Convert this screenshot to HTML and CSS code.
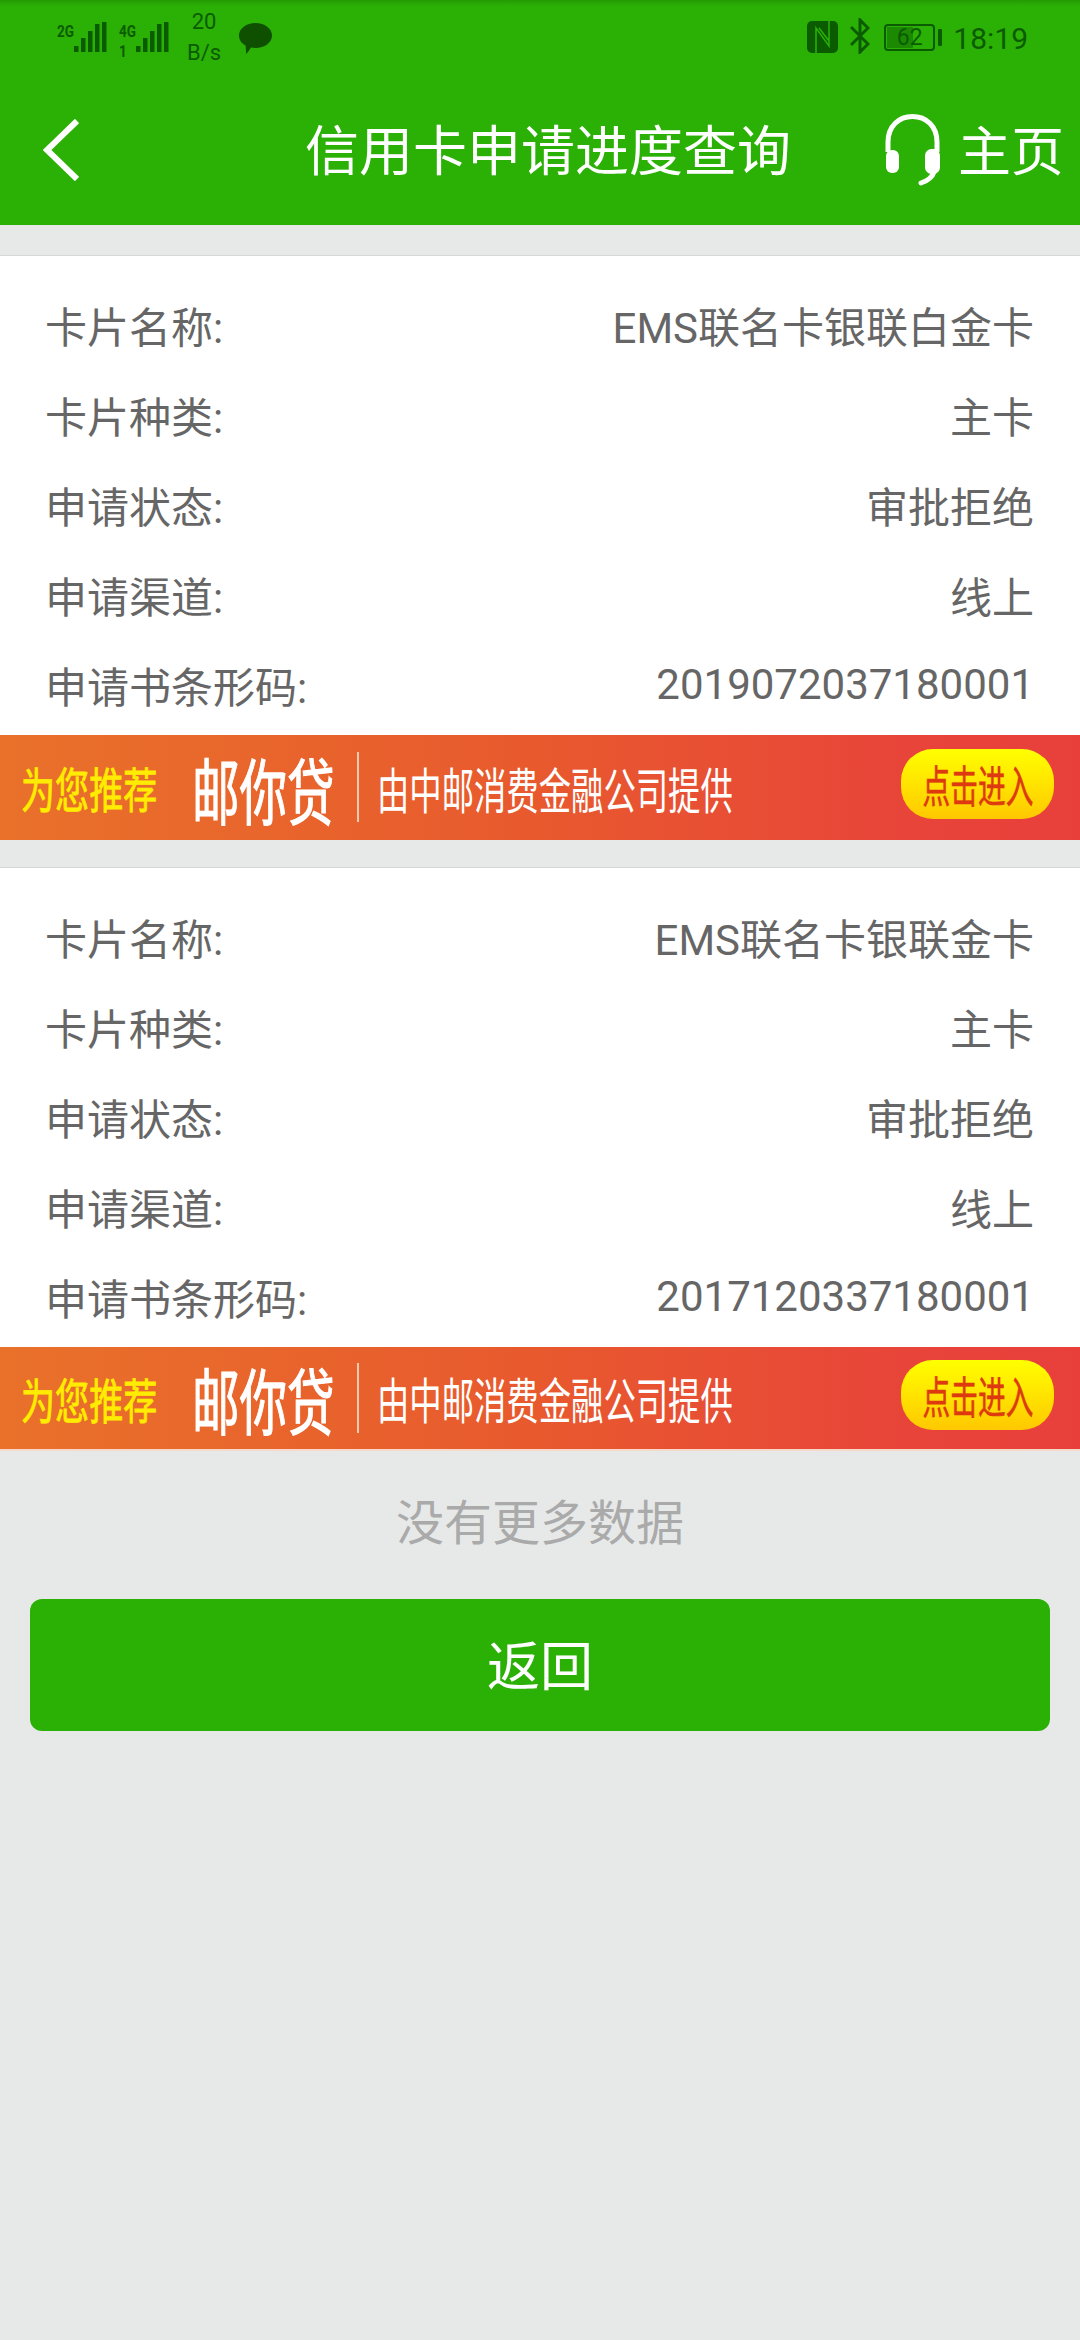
FILE: index.html
```html
<!DOCTYPE html>
<html lang="en">
<head>
    <meta charset="UTF-8">
    <meta name="viewport" content="width=device-width, initial-scale=1.0">
    <title>信用卡申请进度查询</title>
    <link rel="stylesheet" href="styles.css">
</head>
<body>
    <header class="top">
        <div class="status">
            <div class="status-left">
                <div class="sim">
                    <span class="sim-label">2G</span>
                    <svg class="bars" viewBox="0 0 33 30"><path d="M0 24h4.500v6H0zM7 16h4.500v14H7zM14 9h4.500v21H14zM21 2h4.500v28H21zM28 0h4.500v30H28z"/></svg>
                </div>
                <div class="sim sim-second">
                    <span class="sim-label">4G<br>1</span>
                    <svg class="bars" viewBox="0 0 33 30"><path d="M0 24h4.500v6H0zM7 16h4.500v14H7zM14 9h4.500v21H14zM21 2h4.500v28H21zM28 0h4.500v30H28z"/></svg>
                </div>
                <div class="speed"><span>20</span><span>B/s</span></div>
                <svg class="chat" viewBox="0 0 33 31"><path d="M16.500 0C25.600 0 33 5.500 33 12.500S25.600 25 16.500 25c-1.600 0-3-.2-4.500-.5C10.500 27 8.500 29.500 7 31c0-3 0-6-.5-8.500C2.300 20.200 0 16.600 0 12.500 0 5.500 7.400 0 16.500 0z"/></svg>
            </div>
            <div class="status-right">
                <svg class="nfc" viewBox="0 0 31 32"><rect width="31" height="32" rx="5"/><path class="nfc-cut" d="M9 32V7L22 25V0M12 7l10 13"/></svg>
                <svg class="bt" viewBox="0 0 20 36"><path d="M1 9l17 17-8 8V2l8 8L1 27" fill="none" stroke-width="3"/></svg>
                <div class="battery">
                    <div class="battery-body"><span class="battery-fill"></span><span class="battery-num">62</span></div>
                    <span class="battery-tip"></span>
                </div>
                <span class="clock">18:19</span>
            </div>
        </div>
        <nav class="nav">
            <svg class="back" viewBox="0 0 36 62"><path d="M34 2L4 31l30 29" fill="none" stroke="#fff" stroke-width="6"/></svg>
            <h1 class="title">信用卡申请进度查询</h1>
            <div class="home">
                <svg class="headset" viewBox="0 0 56 72"><path d="M3 38V28C3 12 14 2.500 27.500 2.500S52 12 52 28V38" fill="none" stroke="#fff" stroke-width="5"/><rect x="1" y="36" width="13" height="23" rx="6" fill="#fff"/><rect x="40" y="35" width="15" height="25" rx="6.500" fill="#fff"/><path d="M49 58C47 64 42 67 36 69" fill="none" stroke="#fff" stroke-width="5" stroke-linecap="round"/></svg>
                <span class="home-text">主页</span>
            </div>
        </nav>
    </header>

    <main>
        <section class="card">
            <div class="rows">
                <div class="row"><span>卡片名称:</span><span>EMS联名卡银联白金卡</span></div>
                <div class="row"><span>卡片种类:</span><span>主卡</span></div>
                <div class="row"><span>申请状态:</span><span>审批拒绝</span></div>
                <div class="row"><span>申请渠道:</span><span>线上</span></div>
                <div class="row"><span>申请书条形码:</span><span>2019072037180001</span></div>
            </div>
            <div class="banner">
                <span class="b-tag">为您推荐</span>
                <span class="b-name">邮你贷</span>
                <span class="b-line"></span>
                <span class="b-sub">由中邮消费金融公司提供</span>
                <span class="b-btn"><span>点击进入</span></span>
            </div>
        </section>

        <section class="card">
            <div class="rows">
                <div class="row"><span>卡片名称:</span><span>EMS联名卡银联金卡</span></div>
                <div class="row"><span>卡片种类:</span><span>主卡</span></div>
                <div class="row"><span>申请状态:</span><span>审批拒绝</span></div>
                <div class="row"><span>申请渠道:</span><span>线上</span></div>
                <div class="row"><span>申请书条形码:</span><span>2017120337180001</span></div>
            </div>
            <div class="banner banner-last">
                <span class="b-tag">为您推荐</span>
                <span class="b-name">邮你贷</span>
                <span class="b-line"></span>
                <span class="b-sub">由中邮消费金融公司提供</span>
                <span class="b-btn"><span>点击进入</span></span>
            </div>
        </section>

        <p class="no-more">没有更多数据</p>
        <button class="back-btn">返回</button>
    </main>
</body>
</html>
```

FILE: styles.css
```css
* {
    box-sizing: border-box;
}
body {
    margin: 0;
    width: 1080px;
    height: 2340px;
    overflow: hidden;
    background: #e7e9e9;
    font-family: Roboto, "Noto Sans CJK SC", sans-serif;
    color: #666;
}

/* top green area */
.top {
    height: 225px;
    background: linear-gradient(#249a05, #2bb006 6px);
}
.status {
    height: 75px;
    display: flex;
    justify-content: space-between;
    padding: 13px 52px 0 57px;
    color: #0b5c00;
}
.status-left, .status-right {
    display: flex;
    align-items: flex-start;
}
.sim {
    display: flex;
    align-items: flex-start;
    margin-top: 9px;
}
.sim-second {
    margin-left: 12px;
}
.sim-label {
    width: 17px;
    font-size: 16px;
    line-height: 20px;
    font-weight: 700;
    transform: scaleX(0.85);
    transform-origin: left;
}
.bars {
    width: 33px;
    height: 30px;
    fill: #0b5c00;
}
.speed {
    margin-left: 18px;
    width: 34px;
    display: flex;
    flex-direction: column;
    align-items: center;
    font-size: 22px;
    line-height: 31px;
    margin-top: -7px;
}
.chat {
    width: 33px;
    height: 31px;
    margin: 10px 0 0 18px;
    fill: #0f4f00;
}
.status-right {
    padding-top: 8px;
}
.nfc {
    width: 31px;
    height: 32px;
    fill: #0b5c00;
}
.nfc-cut {
    fill: none;
    stroke: #2bb006;
    stroke-width: 1.500;
}
.bt {
    width: 20px;
    height: 36px;
    margin: -3px 0 0 12px;
    stroke: #0b5c00;
}
.battery {
    display: flex;
    align-items: center;
    margin: 3px 0 0 14px;
}
.battery-body {
    position: relative;
    width: 51px;
    height: 27px;
    border: 2px solid #0b5c00;
    border-radius: 4px;
    text-align: center;
    font-size: 23px;
    line-height: 23px;
}
.battery-fill {
    position: absolute;
    left: 1px;
    top: 1px;
    bottom: 1px;
    width: 55%;
    background: rgba(11, 92, 0, 0.45);
}
.battery-num {
    position: relative;
}
.battery-tip {
    width: 4px;
    height: 17px;
    margin-left: 3px;
    background: #0b5c00;
    border-radius: 1px;
}
.clock {
    margin-left: 11px;
    font-size: 30px;
    line-height: 35px;
}

.nav {
    height: 150px;
    display: flex;
    align-items: center;
    padding: 0 16px 0 43px;
    color: #fff;
}
.back {
    width: 36px;
    height: 62px;
}
.title {
    margin: -5px 0 0 226px;
    font-size: 54px;
    font-weight: 400;
    white-space: nowrap;
}
.home {
    margin-left: auto;
    display: flex;
    align-items: center;
}
.headset {
    width: 56px;
    height: 72px;
}
.home-text {
    margin: -5px 0 0 17px;
    font-size: 53px;
}

/* cards */
.card {
    margin-top: 30px;
    background: #fff;
    border-top: 1px solid #d6d8d8;
}
.card + .card {
    margin-top: 27px;
}
.rows {
    padding: 24px 46px 6px 45px;
}
.row {
    height: 89.800px;
    display: flex;
    justify-content: space-between;
    align-items: center;
    font-size: 42px;
}

/* ad strip */
.banner {
    height: 105px;
    display: flex;
    align-items: center;
    padding: 0 26px 0 21px;
    background: linear-gradient(90deg, #e9712a, #e8592e 50%, #e8443a 85%, #e83f3b);
    color: #fff;
    white-space: nowrap;
}
.banner-last {
    height: 104px;
    border-bottom: 2px solid #f6d9c8;
}
.b-tag {
    width: 136px;
    font-size: 48px;
    -webkit-text-stroke: 0.8px #ffec00;
    color: #ffec00;
    transform: scaleX(0.71);
    transform-origin: left;
}
.b-name {
    width: 143px;
    margin-left: 35px;
    font-size: 72px;
    -webkit-text-stroke: 1.2px #fff;
    transform: scaleX(0.66);
    transform-origin: left;
}
.b-line {
    width: 2px;
    height: 70px;
    margin-left: 22px;
    background: #f6c9b0;
}
.b-sub {
    width: 354px;
    margin-left: 18px;
    font-size: 49px;
    transform: scaleX(0.66);
    transform-origin: left;
}
.b-btn {
    margin: -6px 0 0 auto;
    width: 153px;
    height: 70px;
    display: flex;
    align-items: center;
    justify-content: center;
    border-radius: 32px;
    background: linear-gradient(#ffff00, #ffc800);
    color: #dd3a10;
    font-size: 44px;
    -webkit-text-stroke: 0.6px #dd3a10;
}
.b-btn span {
    white-space: nowrap;
    transform: scaleX(0.63);
}

.no-more {
    margin: 49px 0 0;
    text-align: center;
    font-size: 48px;
    line-height: 48px;
    color: #aaa;
}
.back-btn {
    display: block;
    width: 1020px;
    height: 132px;
    margin: 51px 0 0 30px;
    padding: 0 0 4px;
    border: none;
    border-radius: 12px;
    background: #2bb006;
    color: #fff;
    font-family: inherit;
    font-size: 53px;
}
```
